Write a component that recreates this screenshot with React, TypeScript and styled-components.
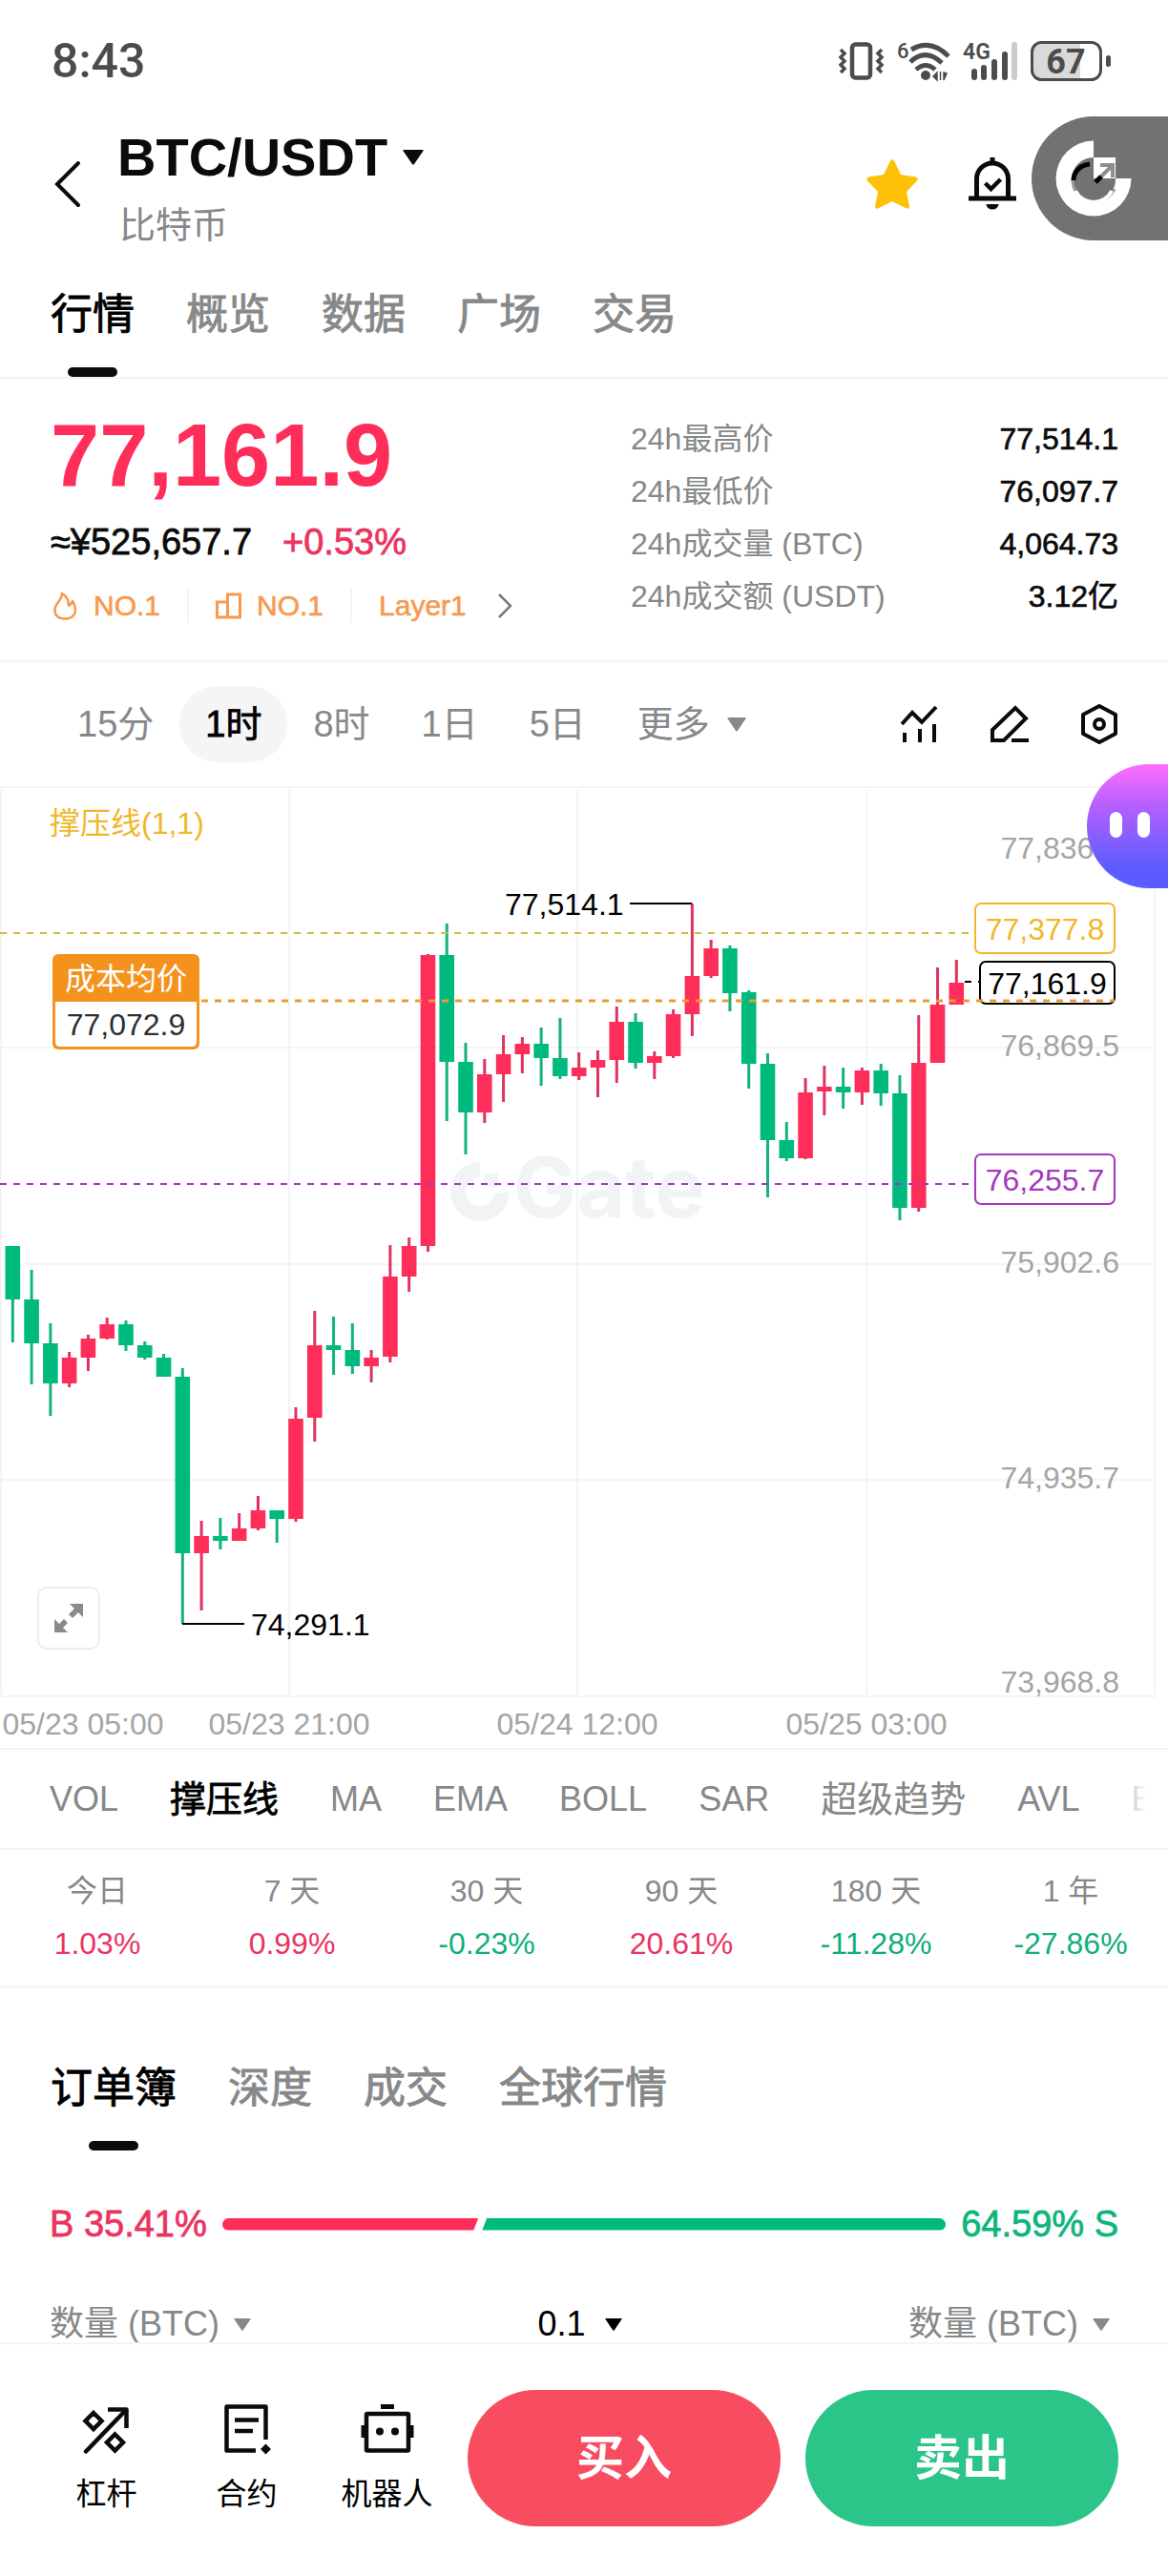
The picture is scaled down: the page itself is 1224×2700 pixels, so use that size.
import React from "react";
import styled, { createGlobalStyle, css } from "styled-components";

const RED = "#ff2d5a";
const GREEN = "#00b97c";
const INK = "#0a0b0b";
const MUTED = "#868889";
const AXIS = "#a3a5a6";
const LINE = "#f3f4f5";
const ORANGE = "#f79a4f";
const AMBER = "#f4921d";
const YELLOW = "#f0b72b";
const PURPLE = "#a436bf";
const SANS = `"Liberation Sans", Arial, "Noto Sans CJK SC", sans-serif`;

const GlobalStyle = createGlobalStyle`
  * { box-sizing: border-box; }
  body { margin: 0; background: #fff; color: ${INK}; font-family: ${SANS}; }
  button, select { font: inherit; color: inherit; background: none; border: 0; padding: 0; margin: 0; cursor: pointer; }
  dl, dd, h1, p { margin: 0; }
  svg { display: block; flex: none; }
`;

const medium = css`
  -webkit-text-stroke: 0.02em currentColor;
`;

const Screen = styled.main`
  position: relative;
  overflow: hidden;
`;

/* ---------- status bar ---------- */

const StatusBar = styled.div`
  display: flex;
  align-items: center;
  justify-content: space-between;
  height: 128px;
  padding: 0 60px 0 54px;
  color: #4c4c4c;
`;

const Clock = styled.time`
  font: 500 50px/60px Roboto, ${SANS};
`;

const StatusIcons = styled.div`
  display: flex;
  align-items: center;
  gap: 13px;
`;

/* ---------- header ---------- */

const Header = styled.header`
  display: flex;
  align-items: center;
  height: 130px;
  padding: 0 159px 0 54px;
`;

const IconButton = styled.button`
  display: flex;
`;

const Pair = styled.div`
  flex: 1;
  display: flex;
  flex-direction: column;
  gap: 16px;
  margin-left: 35px;
`;

const PairButton = styled.button`
  display: flex;
  align-items: center;
  gap: 16px;
  font-size: 56px;
  font-weight: 700;
  line-height: 70px;
`;

const PairName = styled.h1`
  font: inherit;
`;

const PairAlias = styled.p`
  padding-left: 2px;
  font-size: 38px;
  line-height: 40px;
  color: ${MUTED};
`;

const HeaderActions = styled.div`
  display: flex;
  align-items: center;
  gap: 53px;
`;

const Floating = styled.button<{ $top: number; $width: number; $fill: string }>`
  position: absolute;
  top: ${(p) => p.$top}px;
  right: 0;
  width: ${(p) => p.$width}px;
  height: 130px;
  border-radius: 65px 0 0 65px;
  background: ${(p) => p.$fill};
`;

/* ---------- tabs ---------- */

const TabBar = styled.nav<{ $top: number; $ruled?: boolean }>`
  display: flex;
  gap: 54px;
  padding: ${(p) => p.$top}px 53px 0;
  border-bottom: ${(p) => (p.$ruled ? `2px solid ${LINE}` : "0")};
`;

const Tab = styled.button<{ $active?: boolean }>`
  display: flex;
  flex-direction: column;
  align-items: center;
  gap: 25px;
  font-size: 44px;
  line-height: 60px;
  color: ${(p) => (p.$active ? "#000" : MUTED)};
  ${medium}
  &::after {
    content: "";
    width: 52px;
    height: 10px;
    border-radius: 5px;
    background: ${(p) => (p.$active ? INK : "transparent")};
  }
`;

/* ---------- price summary ---------- */

const Summary = styled.section`
  display: flex;
  justify-content: space-between;
  padding: 35px 52px 39px 53px;
  border-bottom: 2px solid ${LINE};
`;

const Price = styled.p`
  font-size: 92px;
  font-weight: 700;
  line-height: 90px;
  color: ${RED};
`;

const Approx = styled.p`
  display: flex;
  gap: 32px;
  margin-top: 24px;
  font-size: 38px;
  line-height: 44px;
  ${medium}
`;

const Change = styled.span`
  color: #ea3460;
`;

const Tags = styled.div`
  display: flex;
  align-items: center;
  margin-top: 27px;
  padding-left: 2px;
  font-size: 30px;
  line-height: 36px;
  color: ${ORANGE};
  ${medium}
  > svg { margin-left: 32px; }
`;

const Tag = styled.a`
  display: flex;
  align-items: center;
  gap: 16px;
  color: inherit;
  text-decoration: none;
  & + & {
    margin-left: 28px;
    padding-left: 28px;
    border-left: 2px solid ${LINE};
  }
`;

const Stats = styled.dl`
  width: 511px;
  padding-top: 1px;
  font-size: 32px;
  line-height: 55px;
`;

const Stat = styled.div`
  display: flex;
  justify-content: space-between;
  dt { color: ${MUTED}; }
  dd { ${medium} }
`;

/* ---------- intervals ---------- */

const Intervals = styled.div`
  display: flex;
  align-items: center;
  height: 132px;
  padding: 0 52px 0 54px;
  border-bottom: 2px solid ${LINE};
`;

const Interval = styled.button<{ $active?: boolean }>`
  display: flex;
  align-items: center;
  gap: 18px;
  height: 80px;
  padding: 0 27px;
  border-radius: 40px;
  font-size: 38px;
  line-height: 44px;
  color: ${(p) => (p.$active ? "#000" : MUTED)};
  background: ${(p) => (p.$active ? "#f5f5f5" : "none")};
  ${(p) => p.$active && medium}
`;

const ChartTools = styled.div`
  display: flex;
  align-items: center;
  gap: 54px;
  margin-left: auto;
`;

/* ---------- chart ---------- */

const ChartPanel = styled.section`
  position: relative;
  border-bottom: 2px solid ${LINE};
`;

const ChartSvg = styled.svg`
  width: 100%;
  height: auto;
  font-family: ${SANS};
  font-size: 32px;
`;

const ExpandButton = styled.button`
  position: absolute;
  left: 39px;
  bottom: 103px;
  display: grid;
  place-items: center;
  width: 66px;
  height: 66px;
  border: 2px solid #ececec;
  border-radius: 10px;
  background: #fff;
`;

/* ---------- indicators ---------- */

const Indicators = styled.nav`
  display: flex;
  align-items: center;
  gap: 54px;
  height: 105px;
  padding: 0 0 0 52px;
  border-bottom: 2px solid ${LINE};
`;

const Indicator = styled.button<{ $cjk?: boolean; $active?: boolean; $faded?: boolean }>`
  flex: none;
  font-size: ${(p) => (p.$cjk ? 38 : 36)}px;
  line-height: 50px;
  color: ${(p) => (p.$active ? "#000" : MUTED)};
  ${(p) => p.$active && medium}
  ${(p) =>
    p.$faded &&
    css`
      mask-image: linear-gradient(90deg, rgba(0, 0, 0, 0.4), transparent 16px);
    `}
`;

/* ---------- performance ---------- */

const Performance = styled.table`
  width: 100%;
  table-layout: fixed;
  border-collapse: collapse;
  border-bottom: 2px solid ${LINE};
  font-size: 32px;
  line-height: 46px;
  text-align: center;
  th {
    padding: 20px 0 9px;
    font-weight: 400;
    color: ${MUTED};
  }
`;

const PerfValue = styled.td<{ $up: boolean }>`
  padding: 0 0 22px;
  color: ${(p) => (p.$up ? "#ea3460" : "#0eaf7a")};
`;

/* ---------- order book ---------- */

const Ratio = styled.div`
  display: flex;
  align-items: center;
  gap: 16px;
  margin-top: 55px;
  padding: 0 52px;
  font-size: 38px;
  line-height: 44px;
`;

const RatioText = styled.span<{ $color: string }>`
  flex: none;
  color: ${(p) => p.$color};
  ${medium}
`;

const RatioBar = styled.div`
  flex: 1;
  display: flex;
  height: 13px;
  border-radius: 7px;
  overflow: hidden;
`;

const BuyShare = styled.div`
  background: ${RED};
  clip-path: polygon(0 0, 100% 0, calc(100% - 5px) 100%, 0 100%);
`;

const SellShare = styled.div`
  flex: 1;
  background: ${GREEN};
  clip-path: polygon(9px 0, 100% 0, 100% 100%, 4px 100%);
`;

const BookHead = styled.div`
  display: flex;
  justify-content: space-between;
  margin-top: 64px;
  padding: 0 52px;
  font-size: 36px;
  border-bottom: 2px solid ${LINE};
`;

const Picker = styled.label<{ $dark?: boolean }>`
  display: flex;
  align-items: center;
  gap: ${(p) => (p.$dark ? 10 : 6)}px;
  color: ${(p) => (p.$dark ? "#000" : MUTED)};
  select {
    appearance: none;
    height: 38px;
    line-height: 38px;
  }
`;

const PickerArrow = styled.span`
  display: grid;
  place-items: center;
  width: 36px;
`;

/* ---------- action bar ---------- */

const ActionBar = styled.footer`
  display: flex;
  align-items: flex-start;
  padding: 48px 52px 50px 38px;
`;

const Shortcut = styled.a`
  display: flex;
  flex-direction: column;
  align-items: center;
  gap: 18px;
  width: 147px;
  margin-top: 15px;
  font-size: 32px;
  line-height: 40px;
  color: #000;
  text-decoration: none;
`;

const TradeButtons = styled.div`
  flex: 1;
  display: flex;
  gap: 26px;
  margin-left: 11px;
`;

const TradeButton = styled.button<{ $color: string }>`
  flex: 1;
  height: 143px;
  border-radius: 72px;
  font-size: 50px;
  font-weight: 700;
  line-height: 60px;
  color: #fff;
  background: ${(p) => p.$color};
`;

/* ---------- icons ---------- */

const Caret = ({ w, h, color }: { w: number; h: number; color: string }) => (
  <svg width={w} height={h} viewBox="0 0 22 16" preserveAspectRatio="none" aria-hidden="true">
    <path d="M1 0h20q1 0 .6 1L12 15q-1 1.400-2 0L.4 1Q0 0 1 0z" fill={color} />
  </svg>
);

const VibrateIcon = () => (
  <svg width="48" height="42" viewBox="0 0 48 42" fill="none" stroke="#4c4c4c" aria-hidden="true">
    <rect x="14" y="3.500" width="19" height="35" rx="3.500" strokeWidth="4.500" />
    <path d="M2 9l4 4-4 4 4 4-4 4 4 4-4 4M45 9l-4 4 4 4-4 4 4 4-4 4 4 4" strokeWidth="3.500" />
  </svg>
);

const WifiIcon = () => (
  <svg width="56" height="56" viewBox="0 -6 56 56" fill="none" stroke="#4c4c4c" strokeWidth="5" aria-hidden="true">
    <text x="0" y="19" fontFamily="Roboto" fontSize="22" fontWeight="500" fill="#4c4c4c" stroke="none">6</text>
    <path d="M15 10Q35-2 54 17M14 23Q30 8 47 24M20 31q10-9 20 0" />
    <circle cx="30" cy="37" r="5" fill="#4c4c4c" stroke="none" />
    <path d="M42 34v8l-4-4zM45.500 33v9M49 34v8l3-7z" fill="#4c4c4c" stroke="#4c4c4c" strokeWidth="1.500" />
  </svg>
);

const SignalIcon = () => (
  <svg width="58" height="56" viewBox="0 -6 58 56" aria-hidden="true">
    <text x="0" y="20" fontFamily="Roboto" fontSize="23" fontWeight="600" fill="#4c4c4c">4G</text>
    <g fill="#4c4c4c">
      <rect x="9" y="30" width="6" height="12" rx="3" />
      <rect x="19" y="26" width="6" height="16" rx="3" />
      <rect x="30" y="20" width="6" height="22" rx="3" />
      <rect x="41" y="12" width="6" height="30" rx="3" />
    </g>
    <rect x="51" y="2" width="6" height="40" rx="3" fill="#cbcbcb" />
  </svg>
);

const BatteryIcon = () => (
  <svg width="84" height="54" viewBox="0 -6 84 54" role="img" aria-label="67%">
    <rect x="2" y="2" width="50" height="38" rx="9" fill="#d9d9d9" />
    <rect x="40" y="2" width="12" height="38" fill="#d9d9d9" />
    <rect x="1.500" y="1.500" width="72" height="39" rx="10" fill="none" stroke="#4c4c4c" strokeWidth="3" />
    <rect x="79" y="15" width="5" height="12" rx="2.500" fill="#4c4c4c" />
    <text x="37" y="34" textAnchor="middle" fontFamily="Roboto" fontSize="36" fontWeight="700" fill="#4c4c4c">67</text>
  </svg>
);

const BackIcon = () => (
  <svg width="34" height="50" viewBox="0 0 34 50" fill="none" stroke={INK} strokeWidth="4" strokeLinecap="round" aria-hidden="true">
    <path d="M28 3L6 25l22 22" />
  </svg>
);

const StarIcon = () => (
  <svg width="54" height="52" viewBox="0 0 54 52" aria-hidden="true">
    <path
      d="M25 1.500q2-2.500 4 0l7 14.500 15.500 2.500q3.500 1 1.500 4L42 34l3 15q0 3.500-3 2.500L27 44l-15 7.500q-3 1-3-2.500l3-15L1 22.500q-2-3 1.500-4L18 16z"
      fill="#ffc107"
    />
  </svg>
);

const BellIcon = () => (
  <svg width="50" height="56" viewBox="0 0 50 56" fill="none" stroke={INK} strokeWidth="5" aria-hidden="true">
    <path d="M8.500 42V22.500a16.500 16.500 0 0 1 33 0V42M0 43h50" />
    <path d="M25 0v7" />
    <path d="M17.500 27l6 6 10-10" strokeWidth="4.500" />
    <path d="M18.500 49h13a6.500 5.500 0 0 1-13 0z" fill={INK} stroke="none" />
  </svg>
);

const GateBadge = () => (
  <svg width="143" height="130" viewBox="0 0 143 130" fill="none" aria-hidden="true">
    <path d="M65 25.500A39.500 39.500 0 1 0 104.500 65H88A23 23 0 1 1 65 43z" fill="#fff" />
    <path d="M43 66a23 23 0 0 0 44 10" stroke="#999b9a" strokeWidth="3" />
    <path d="M46 78a21 21 0 0 0 38 0" stroke="#fff" strokeWidth="4" />
    <path d="M44 67c0-9 7-16 17-17" stroke="#000" strokeWidth="5" />
    <path d="M65 43h23v22H65z" fill="#fff" />
    <path d="M72 51h13v13M85 51L69 67" stroke="#8c8e8d" strokeWidth="4" />
    <path d="M67 69l6-6" stroke="#000" strokeWidth="5" />
  </svg>
);

const BotFace = () => (
  <svg width="85" height="130" viewBox="0 0 85 130" aria-hidden="true">
    <rect x="24" y="50" width="13" height="27" rx="6.500" fill="#fff" />
    <rect x="53" y="50" width="13" height="27" rx="6.500" fill="#fff" />
  </svg>
);

const FlameIcon = () => (
  <svg width="27" height="30" viewBox="0 0 27 30" fill="none" stroke={ORANGE} strokeWidth="2.500" strokeLinejoin="round" aria-hidden="true">
    <path d="M10 2c5 3 7 8 7 13 2-1 3-2 4-5 2 3 3 5 3 9 0 6-4 9.500-11 9.500S2.500 25 2.500 19C2.500 12 10 10 10 2z" />
  </svg>
);

const PodiumIcon = () => (
  <svg width="27" height="28" viewBox="0 0 27 28" fill="none" stroke={ORANGE} strokeWidth="3" aria-hidden="true">
    <path d="M1.500 10h11v16h-11zM12.500 10V2h13v24h-13" />
  </svg>
);

const ChevronIcon = () => (
  <svg width="16" height="28" viewBox="0 0 16 28" fill="none" stroke="#77797a" strokeWidth="2.500" aria-hidden="true">
    <path d="M2 2l12 12L2 26" />
  </svg>
);

const TrendIcon = () => (
  <svg width="40" height="42" viewBox="0 0 40 42" fill="none" stroke={INK} strokeWidth="4" aria-hidden="true">
    <path d="M1 21l11-12 10 10L37 3M4 30v10M20 26v14M35 21v19" />
  </svg>
);

const PencilIcon = () => (
  <svg width="40" height="42" viewBox="0 0 40 42" fill="none" stroke={INK} strokeWidth="4" aria-hidden="true">
    <path d="M2 38V27L26 4l11 11-23 23zM22 38h18" />
  </svg>
);

const HexIcon = () => (
  <svg width="40" height="44" viewBox="0 0 40 44" fill="none" stroke={INK} strokeWidth="4" aria-hidden="true">
    <path d="M20 3l17 9v20l-17 9-17-9V12z" strokeLinejoin="round" />
    <circle cx="20" cy="22" r="5" />
  </svg>
);

const ExpandIcon = () => (
  <svg width="32" height="32" viewBox="0 0 32 32" fill="#8a8a8a" aria-hidden="true">
    <path d="M17 1h14v14l-5-5-6 6-4-4 6-6z" />
    <path d="M1 17l5 5 5-5 4 4-5 5 5 5H1z" />
  </svg>
);

const MarginIcon = () => (
  <svg width="56" height="56" viewBox="0 0 56 56" fill="none" stroke={INK} strokeWidth="4.500" aria-hidden="true">
    <path d="M6 49.500L47 7" strokeLinecap="round" />
    <path d="M29 5.500h19.500V25" strokeLinejoin="round" />
    <path d="M14 9l8.500 8.500L14 26l-8.500-8.500zM36.500 31.500L45 40l-8.500 8.500L28 40z" />
  </svg>
);

const ContractIcon = () => (
  <svg width="56" height="56" viewBox="0 0 56 56" fill="none" stroke={INK} strokeWidth="4.500" aria-hidden="true">
    <path d="M37 48.500H6.500V2.500h41V37" strokeLinejoin="round" />
    <path d="M15 16.500h25M15 28h19" />
    <path d="M47.500 41.500l5.500 5.500-5.500 5.500L42 47z" fill={INK} stroke="none" />
  </svg>
);

const RobotIcon = () => (
  <svg width="56" height="56" viewBox="0 0 56 56" fill="none" stroke={INK} strokeWidth="4.500" aria-hidden="true">
    <rect x="6" y="10" width="44" height="38.500" rx="1" />
    <path d="M21 2.500h14" strokeWidth="5" />
    <path d="M2.500 22v13M53.500 22v13" strokeWidth="4" />
    <circle cx="20" cy="28.500" r="4" fill={INK} stroke="none" />
    <circle cx="36" cy="28.500" r="4" fill={INK} stroke="none" />
  </svg>
);

/* ---------- chart data ---------- */

type Candle = [up: 0 | 1, high: number, top: number, bottom: number, low: number];

const CANDLES: Candle[] = [
  [0, 480, 480, 536, 581], [0, 505, 536, 582, 625], [0, 561, 582, 624, 658], [1, 591, 597, 624, 628],
  [1, 573, 577, 597, 611], [1, 555, 562, 577, 578], [0, 558, 562, 584, 590], [0, 580, 584, 597, 599],
  [0, 593, 597, 617, 617], [0, 608, 617, 802, 876], [1, 768, 784, 802, 862], [0, 765, 784, 789, 798],
  [1, 760, 776, 789, 789], [1, 742, 757, 776, 778], [0, 757, 757, 766, 791], [1, 649, 661, 766, 769],
  [1, 548, 584, 660, 685], [0, 554, 584, 589, 615], [0, 561, 589, 606, 614], [1, 589, 597, 606, 623],
  [1, 479, 512, 596, 602], [1, 471, 480, 512, 528], [1, 174, 175, 480, 486], [0, 142, 175, 287, 349],
  [0, 267, 287, 340, 384], [1, 284, 300, 340, 351], [1, 259, 279, 300, 329], [1, 261, 268, 279, 299],
  [0, 251, 268, 283, 312], [0, 241, 283, 302, 305], [1, 277, 293, 302, 306], [1, 275, 285, 293, 324],
  [1, 229, 245, 285, 309], [0, 236, 245, 288, 294], [1, 276, 281, 288, 305], [1, 232, 237, 281, 283],
  [1, 121, 197, 237, 260], [1, 159, 168, 197, 199], [0, 165, 168, 215, 234], [0, 212, 214, 289, 315],
  [0, 278, 289, 369, 429], [0, 350, 369, 388, 391], [1, 304, 319, 388, 389], [1, 291, 313, 318, 343],
  [0, 293, 313, 319, 336], [1, 293, 296, 319, 332], [0, 289, 296, 320, 333], [0, 301, 320, 440, 453],
  [1, 238, 288, 440, 444], [1, 188, 227, 288, 288], [1, 180, 204, 227, 227],
];

const PITCH = 19.78;
const FIRST = 13.3;

const PRICE_AXIS: [string, number][] = [
  ["77,836.4", 74], ["76,869.5", 281], ["75,902.6", 508], ["74,935.7", 734], ["73,968.8", 948],
];
const TIME_AXIS: [string, number][] = [
  ["05/23 05:00", 87], ["05/23 21:00", 303], ["05/24 12:00", 605], ["05/25 03:00", 908],
];

const PriceTag = ({ x, y, h, color, children }: { x: number; y: number; h: number; color: string; children: string }) => (
  <g>
    <rect x={x} y={y} width={1168 - x} height={h} rx="6" fill="#fff" stroke={color} strokeWidth="2" />
    <text x={(x + 1168) / 2} y={y + h / 2 + 12} textAnchor="middle" fill={color}>{children}</text>
  </g>
);

const Chart = () => (
  <ChartSvg viewBox="0 0 1224 1006" role="img" aria-label="BTC/USDT">
    <g stroke={LINE} strokeWidth="2">
      {[272, 499, 725, 952].map((y) => <path key={y} d={`M0 ${y}H1211`} />)}
      {[1, 303, 605, 908, 1210].map((x) => <path key={x} d={`M${x} 2V950`} />)}
    </g>

    <g fill="#f2f4f4">
      <path d="M503 392A31 31 0 1 0 534 424H518A15 15 0 1 1 503 408z" />
      <path d="M508 404h14v14h-14z" />
      <text x="538" y="450" fontFamily="Inter" fontWeight="700" fontSize="88">Gate</text>
    </g>

    <text x="52" y="48" fill={YELLOW}>撑压线(1,1)</text>
    <g fill={AXIS}>
      {PRICE_AXIS.map(([label, y]) => <text key={label} x="1173" y={y} textAnchor="end">{label}</text>)}
      {TIME_AXIS.map(([label, x]) => <text key={label} x={x} y="992" textAnchor="middle">{label}</text>)}
    </g>

    {CANDLES.map(([up, high, top, bottom, low], i) => {
      const x = FIRST + i * PITCH;
      return (
        <g key={i} fill={up ? RED : GREEN}>
          <rect x={x - 1.5} y={high} width="3" height={low - high} fill={up ? "#e0335f" : "#12b37c"} />
          <rect x={x - 7.8} y={top} width="15.600" height={bottom - top} />
        </g>
      );
    })}

    <g fill="none" strokeWidth="2" strokeDasharray="7 7">
      <path d="M0 152H1016" stroke="#d6b93c" />
      <path d="M0 415H1016" stroke={PURPLE} />
    </g>

    <g stroke="#000" strokeWidth="2" fill="none">
      <path d="M660 121H725M191 876H256" />
      <path d="M1011 203H1026" strokeDasharray="7 7" />
    </g>
    <text x="529" y="133">77,514.1</text>
    <text x="263" y="888">74,291.1</text>

    <PriceTag x={1022} y={121} h={52} color={YELLOW}>77,377.8</PriceTag>
    <PriceTag x={1027} y={182} h={44} color="#000">77,161.9</PriceTag>
    <PriceTag x={1022} y={384} h={52} color={PURPLE}>76,255.7</PriceTag>

    <path d="M211 223H1168" stroke="#ec9a36" strokeWidth="3" strokeDasharray="7 7" />
    <rect x="55" y="174" width="154" height="100" rx="6" fill={AMBER} />
    <path d="M58 224h148v42q0 5-5 5H63q-5 0-5-5z" fill="#fff" />
    <text x="132" y="211" textAnchor="middle" fill="#fff">成本均价</text>
    <text x="132" y="259" textAnchor="middle" fill="#2c3033">77,072.9</text>
  </ChartSvg>
);

/* ---------- page ---------- */

const STATS = [
  ["24h最高价", "77,514.1"],
  ["24h最低价", "76,097.7"],
  ["24h成交量 (BTC)", "4,064.73"],
  ["24h成交额 (USDT)", "3.12亿"],
];

const INDICATORS = ["VOL", "撑压线", "MA", "EMA", "BOLL", "SAR", "超级趋势", "AVL", "E"];

const PERFORMANCE = [
  ["今日", "1.03%"], ["7 天", "0.99%"], ["30 天", "-0.23%"],
  ["90 天", "20.61%"], ["180 天", "-11.28%"], ["1 年", "-27.86%"],
];

const BUY_SHARE = 35.41;

const BookPicker = ({ label, value, dark }: { label: string; value: string; dark?: boolean }) => (
  <Picker $dark={dark}>
    <select aria-label={label} defaultValue={value}>
      <option>{value}</option>
    </select>
    <PickerArrow>
      <Caret w={18} h={13} color={dark ? "#000" : MUTED} />
    </PickerArrow>
  </Picker>
);

export default function App() {
  return (
    <Screen>
      <GlobalStyle />
      <StatusBar>
        <Clock>8:43</Clock>
        <StatusIcons>
          <VibrateIcon />
          <WifiIcon />
          <SignalIcon />
          <BatteryIcon />
        </StatusIcons>
      </StatusBar>

      <Header>
        <IconButton aria-label="返回"><BackIcon /></IconButton>
        <Pair>
          <PairButton>
            <PairName>BTC/USDT</PairName>
            <Caret w={22} h={16} color={INK} />
          </PairButton>
          <PairAlias>比特币</PairAlias>
        </Pair>
        <HeaderActions>
          <IconButton aria-label="收藏"><StarIcon /></IconButton>
          <IconButton aria-label="提醒"><BellIcon /></IconButton>
        </HeaderActions>
      </Header>

      <TabBar $top={42} $ruled>
        {["行情", "概览", "数据", "广场", "交易"].map((name, i) => (
          <Tab key={name} $active={i === 0}>{name}</Tab>
        ))}
      </TabBar>

      <Summary>
        <div>
          <Price>77,161.9</Price>
          <Approx>
            <span>≈¥525,657.7</span>
            <Change>+0.53%</Change>
          </Approx>
          <Tags>
            <Tag href="#hot"><FlameIcon />NO.1</Tag>
            <Tag href="#rank"><PodiumIcon />NO.1</Tag>
            <Tag href="#layer1">Layer1</Tag>
            <ChevronIcon />
          </Tags>
        </div>
        <Stats>
          {STATS.map(([name, value]) => (
            <Stat key={name}>
              <dt>{name}</dt>
              <dd>{value}</dd>
            </Stat>
          ))}
        </Stats>
      </Summary>

      <Intervals>
        {["15分", "1时", "8时", "1日", "5日"].map((name) => (
          <Interval key={name} $active={name === "1时"}>{name}</Interval>
        ))}
        <Interval aria-haspopup="menu">更多<Caret w={20} h={15} color={MUTED} /></Interval>
        <ChartTools>
          <IconButton aria-label="指标"><TrendIcon /></IconButton>
          <IconButton aria-label="画线"><PencilIcon /></IconButton>
          <IconButton aria-label="设置"><HexIcon /></IconButton>
        </ChartTools>
      </Intervals>

      <ChartPanel>
        <Chart />
        <ExpandButton aria-label="全屏"><ExpandIcon /></ExpandButton>
      </ChartPanel>

      <Indicators>
        {INDICATORS.map((name) => (
          <Indicator key={name} $cjk={name.charCodeAt(0) > 255} $active={name === "撑压线"} $faded={name === "E"}>
            {name}
          </Indicator>
        ))}
      </Indicators>

      <Performance>
        <thead>
          <tr>{PERFORMANCE.map(([name]) => <th key={name} scope="col">{name}</th>)}</tr>
        </thead>
        <tbody>
          <tr>
            {PERFORMANCE.map(([name, value]) => (
              <PerfValue key={name} $up={!value.startsWith("-")}>{value}</PerfValue>
            ))}
          </tr>
        </tbody>
      </Performance>

      <TabBar $top={75}>
        {["订单簿", "深度", "成交", "全球行情"].map((name, i) => (
          <Tab key={name} $active={i === 0}>{name}</Tab>
        ))}
      </TabBar>

      <Ratio>
        <RatioText $color="#ea3460">B {BUY_SHARE}%</RatioText>
        <RatioBar>
          <BuyShare style={{ width: `${BUY_SHARE}%` }} />
          <SellShare />
        </RatioBar>
        <RatioText $color="#0eb57c">{(100 - BUY_SHARE).toFixed(2)}% S</RatioText>
      </Ratio>

      <BookHead>
        <BookPicker label="买盘单位" value="数量 (BTC)" />
        <BookPicker label="价格精度" value="0.1" dark />
        <BookPicker label="卖盘单位" value="数量 (BTC)" />
      </BookHead>

      <ActionBar>
        <Shortcut href="#margin"><MarginIcon />杠杆</Shortcut>
        <Shortcut href="#futures"><ContractIcon />合约</Shortcut>
        <Shortcut href="#bots"><RobotIcon />机器人</Shortcut>
        <TradeButtons>
          <TradeButton $color="#f84d60">买入</TradeButton>
          <TradeButton $color="#2bc489">卖出</TradeButton>
        </TradeButtons>
      </ActionBar>

      <Floating aria-label="Gate" $top={122} $width={143} $fill="#717372"><GateBadge /></Floating>
      <Floating aria-label="助手" $top={801} $width={85} $fill="linear-gradient(#ff6cff, #b160ff 35%, #5a5cff 85%)"><BotFace /></Floating>
    </Screen>
  );
}
